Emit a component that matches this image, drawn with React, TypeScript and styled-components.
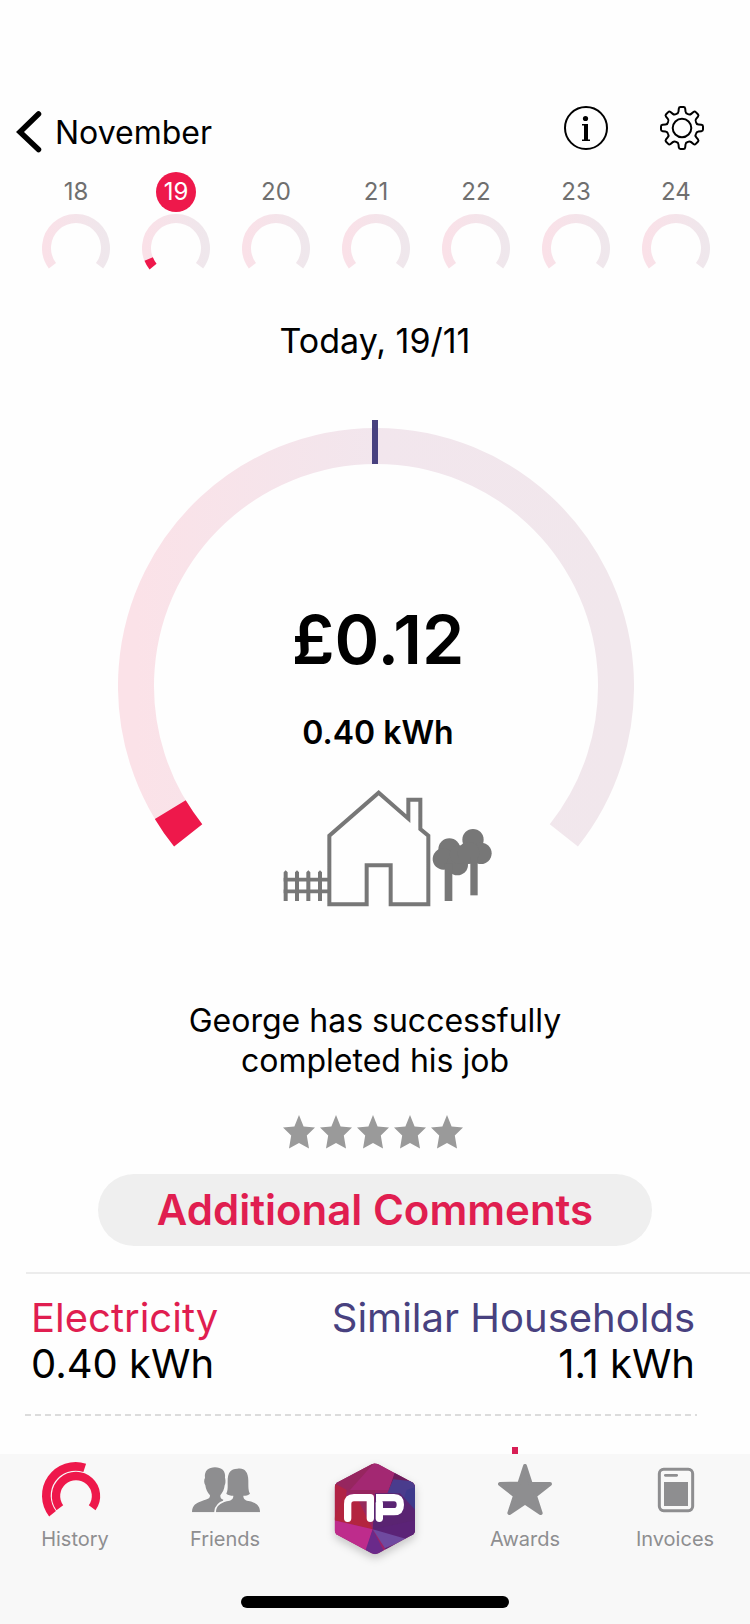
import React from "react";
import styled, { createGlobalStyle } from "styled-components";

const color = {
  accent: "#ee184b",
  accentDeep: "#e01e50",
  indigo: "#48417f",
  grey: "#8e8e90",
  dayGrey: "#6f6f6f",
  drawing: "#777777",
  star: "#9a9a9a",
  line: "#ececec",
  dash: "#dcdcdc",
  bar: "#f8f8f8",
};

const GlobalStyle = createGlobalStyle`
  *, *::before, *::after { box-sizing: border-box; }
  body {
    margin: 0;
    background: #fefefe;
    color: #000;
    font-family: Inter, "Liberation Sans", sans-serif;
  }
  h1, h2, p, dl, dt, dd { margin: 0; font-weight: 400; }
  button { border: 0; padding: 0; background: none; font: inherit; color: inherit; cursor: pointer; }
  a { color: inherit; text-decoration: none; }
  svg { display: block; }
`;

const Screen = styled.div`
  display: flex;
  flex-direction: column;
  min-height: 100vh;
  padding-top: 96px;
`;

const Header = styled.header`
  display: flex;
  align-items: center;
  justify-content: space-between;
  height: 64px;
  padding: 0 46px 0 16px;
`;

const BackLink = styled.a`
  display: flex;
  align-items: center;
  gap: 12px;
  padding-top: 10px;
  font-size: 32px;
  line-height: 40px;
`;

const HeaderActions = styled.div`
  display: flex;
  gap: 52px;
`;

const IconButton = styled.button`
  width: 44px;
  height: 44px;
`;

const Week = styled.nav`
  display: flex;
  margin-top: 12px;
  padding: 0 24px 0 26px;
`;

const Day = styled.button`
  display: flex;
  flex: 1;
  flex-direction: column;
  align-items: center;
  gap: 2px;
`;

const DayNumber = styled.span<{ $selected: boolean }>`
  width: 40px;
  height: 40px;
  border-radius: 50%;
  background: ${(p) => (p.$selected ? color.accent : "transparent")};
  color: ${(p) => (p.$selected ? "#fff" : color.dayGrey)};
  font-size: 24px;
  line-height: 40px;
  text-align: center;
`;

const DateTitle = styled.h1`
  margin-top: 51px;
  font-size: 34px;
  line-height: 40px;
  text-align: center;
`;

const Gauge = styled.section`
  display: grid;
  justify-items: center;
  margin-top: 59px;
  padding-left: 2px;

  & > * { grid-area: 1 / 1; }
`;

const Readout = styled.div`
  display: flex;
  flex-direction: column;
  align-items: center;
  padding: 179px 0 0 4px;
`;

const Cost = styled.p`
  font-size: 68px;
  font-weight: 600;
  line-height: 80px;
`;

const Energy = styled.p`
  margin: 34px 0 36px;
  font-size: 32px;
  font-weight: 600;
  line-height: 40px;
`;

const HouseDrawing = styled.svg`
  margin-left: 20px;
`;

const Message = styled.p`
  max-width: 400px;
  margin: 94px auto 0;
  font-size: 32px;
  line-height: 40px;
  text-align: center;
`;

const Rating = styled.div`
  display: flex;
  justify-content: center;
  gap: 5px;
  margin-top: 34px;
  padding-right: 4px;
`;

const CommentsButton = styled.button`
  width: calc(100% - 196px);
  height: 72px;
  margin: 25px auto 0;
  border-radius: 36px;
  background: #efefef;
  color: ${color.accentDeep};
  font-size: 42px;
  font-weight: 600;
  line-height: 72px;
`;

const Comparison = styled.dl`
  display: flex;
  justify-content: space-between;
  margin: 26px 0 0 26px;
  padding: 21px 55px 27px 5px;
  border-top: 2px solid ${color.line};
  font-size: 40px;
  line-height: 46px;
`;

const Figure = styled.div<{ $tint: string; $end?: boolean }>`
  text-align: ${(p) => (p.$end ? "right" : "left")};

  dt { color: ${(p) => p.$tint}; }
`;

const DashedRule = styled.hr`
  width: calc(100% - 78px);
  height: 2px;
  margin: 0 53px 0 25px;
  border: 0;
  background: repeating-linear-gradient(90deg, ${color.dash} 0 6px, transparent 6px 10px);
`;

const ChartPeek = styled.div`
  display: flex;
  flex: 1;
  align-items: flex-end;
  justify-content: flex-end;
  padding: 31px 232px 0 0;
`;

const ChartBar = styled.span`
  width: 6px;
  height: 7px;
  background: #d81e55;
`;

const Footer = styled.footer`
  display: flex;
  flex-direction: column;
  align-items: center;
  justify-content: space-between;
  height: 170px;
  padding: 6px 0 16px;
  background: ${color.bar};
`;

const Tabs = styled.nav`
  display: flex;
  width: 100%;
`;

const Tab = styled.a`
  display: flex;
  flex: 1;
  flex-direction: column;
  align-items: center;
  color: ${color.grey};
  font-size: 20px;
  line-height: 26px;
`;

const LogoIcon = styled.svg`
  filter: drop-shadow(0 4px 4px rgba(0, 0, 0, 0.2));
`;

const HomeIndicator = styled.div`
  width: 268px;
  height: 12px;
  border-radius: 6px;
  background: #000;
`;

/* Arc around (cx, cy); angles in degrees, clockwise from the top. */
function arc(cx: number, cy: number, r: number, from: number, to: number) {
  const point = (deg: number) => {
    const a = ((deg - 90) * Math.PI) / 180;
    return `${(cx + r * Math.cos(a)).toFixed(2)} ${(cy + r * Math.sin(a)).toFixed(2)}`;
  };
  return `M${point(from)}A${r} ${r} 0 ${to - from > 180 ? 1 : 0} 1 ${point(to)}`;
}

function gearPath() {
  const tooth: Array<[string, number[][]]> = [
    ["L", [[-5.8, -14]]],
    ["Q", [[-3.7, -14.4], [-3.5, -16.5]]],
    ["L", [[-3.2, -19.4]]],
    ["Q", [[-3, -21], [-1.5, -21]]],
    ["L", [[1.5, -21]]],
    ["Q", [[3, -21], [3.2, -19.4]]],
    ["L", [[3.5, -16.5]]],
    ["Q", [[3.7, -14.4], [5.8, -14]]],
  ];
  let d = "";
  for (let i = 0; i < 8; i++) {
    const a = (i * Math.PI) / 4;
    for (const [cmd, pts] of tooth) {
      d += (d === "" ? "M" : cmd) + pts
        .map(([x, y]) => `${(22 + x * Math.cos(a) - y * Math.sin(a)).toFixed(2)} ${(22 + x * Math.sin(a) + y * Math.cos(a)).toFixed(2)}`)
        .join(" ");
    }
  }
  return d + "Z";
}

const MiniRing = ({ day, used }: { day: number; used: boolean }) => (
  <svg width="68" height="56" viewBox="0 0 68 56" aria-hidden="true">
    <defs>
      <linearGradient id={`ring${day}`} x1="0" x2="1" y1="0" y2="0">
        <stop offset="0" stopColor="#fae1e8" />
        <stop offset="1" stopColor="#efe7ec" />
      </linearGradient>
    </defs>
    <path d={arc(34, 34, 29.5, -127, 127)} fill="none" stroke={`url(#ring${day})`} strokeWidth="9" />
    {used && <path d={arc(34, 34, 29.5, -129, -112)} fill="none" stroke={color.accent} strokeWidth="9" />}
  </svg>
);

const Dial = () => (
  <svg width="516" height="430" viewBox="0 0 516 430" aria-hidden="true">
    <defs>
      <linearGradient id="dial" x1="0" x2="1" y1="0" y2="0">
        <stop offset="0" stopColor="#fbe2e8" />
        <stop offset="0.5" stopColor="#f2e6ed" />
        <stop offset="1" stopColor="#f1e7ec" />
      </linearGradient>
    </defs>
    <path d={arc(258, 266, 240, -128.5, 128.5)} fill="none" stroke="url(#dial)" strokeWidth="36" />
    <path d={arc(258, 266, 240, -128.5, -121)} fill="none" stroke={color.accent} strokeWidth="36" />
    <rect x="254" y="0" width="6" height="44" fill={color.indigo} />
  </svg>
);

const House = () => (
  <HouseDrawing width="210" height="118" viewBox="70 596 630 354" aria-hidden="true">
    <path
      d="M209 942V736L357 607L446 685V628H482V716L506 736V942H393V825H321V942Z"
      fill="none"
      stroke={color.drawing}
      strokeWidth="12"
    />
    <path d="M72 868H205M72 903H205" stroke={color.drawing} strokeWidth="11" />
    <path
      d="M72 932V846L78 840L84 846V932ZM106 932V846L112 840L118 846V932ZM140 932V846L146 840L152 846V932ZM175 932V846L181 840L187 846V932Z"
      fill={color.drawing}
    />
    <g fill={color.drawing}>
      <circle cx="569" cy="777" r="33" />
      <circle cx="551" cy="806" r="32" />
      <circle cx="593" cy="823" r="32" />
      <circle cx="598" cy="793" r="28" />
      <rect x="555" y="820" width="23" height="112" />
      <circle cx="640" cy="748" r="32" />
      <circle cx="664" cy="789" r="32" />
      <circle cx="627" cy="788" r="33" />
      <rect x="632" y="800" width="22" height="115" />
    </g>
  </HouseDrawing>
);

const HistoryIcon = () => (
  <svg width="80" height="66" viewBox="105 60 240 198" fill="none" stroke={color.accent} aria-hidden="true">
    <path d={arc(227, 167, 88, -128, 18)} strokeWidth="26" />
    <path d={arc(228, 168, 60, -126, 126)} strokeWidth="25" />
  </svg>
);

const FriendsIcon = () => (
  <svg width="80" height="66" viewBox="555 60 240 198" fill={color.grey} aria-hidden="true">
    <path d="M576 217C576 195 590 188 606 183C622 178 630 177 630 166C622 158 617 146 616 136C611 128 612 118 615 114C612 92 626 82 645 82C664 82 678 92 675 114C677 118 678 130 674 136C673 148 668 158 661 166C661 172 662 177 670 179L660 217Z" />
    <path
      d="M648 217C648 198 660 190 680 184C694 181 700 178 700 167C692 167 684 165 679 161C684 152 683 140 683 124C683 98 692 86 712 86C730 82 745 92 745 122C745 142 745 152 750 161C745 166 737 167 730 167C730 178 736 181 750 184C770 190 780 198 780 217Z"
      stroke={color.bar}
      strokeWidth="11"
      paintOrder="stroke"
    />
    <rect x="560" y="217" width="230" height="8" fill={color.bar} />
  </svg>
);

const AwardsIcon = () => (
  <svg width="80" height="66" viewBox="105 60 240 198" aria-hidden="true">
    <path
      d="M225 78L242 131L300 132L255 167L272 219L225 188L178 219L195 167L150 132L208 131Z"
      fill={color.grey}
      stroke={color.grey}
      strokeWidth="12"
      strokeLinejoin="round"
    />
  </svg>
);

const InvoicesIcon = () => (
  <svg width="80" height="66" viewBox="555 60 240 198" aria-hidden="true">
    <rect x="628" y="88" width="100" height="124" rx="13" fill="none" stroke={color.grey} strokeWidth="9" />
    <path d="M646 106H680" stroke={color.grey} strokeWidth="8" strokeLinecap="round" />
    <rect x="642" y="126" width="72" height="72" fill={color.grey} />
  </svg>
);

const BrandIcon = () => (
  <LogoIcon width="96" height="96" viewBox="81 60 288 288" aria-hidden="true">
    <defs>
      <clipPath id="hexagon">
        <path d="M215 73Q225 68 235 73L336 127Q345 132 345 143V269Q345 280 336 285L235 340Q225 345 215 340L113 285Q104 280 104 269V143Q104 132 113 127Z" />
      </clipPath>
    </defs>
    <g clipPath="url(#hexagon)">
      <rect x="100" y="66" width="250" height="280" fill="#9b2468" />
      <path d="M100 130L150 160L225 165V66H100Z" fill="#96265f" />
      <path d="M225 66L285 100L265 150L150 150Z" fill="#a32872" />
      <path d="M100 128L140 150L132 245L100 240Z" fill="#b12345" />
      <path d="M130 170L170 170L218 268L100 240Z" fill="#b3253f" />
      <path d="M170 170H225V268Z" fill="#962b5b" />
      <path d="M285 95L350 130V160L280 120L265 155Z" fill="#6b1d5c" />
      <path d="M280 118L350 125V215L300 165L262 160Z" fill="#4a3c8d" />
      <path d="M320 150L350 140V280L300 210Z" fill="#3e3a8c" />
      <path d="M225 160H300L350 215V290L218 268Z" fill="#5a2472" />
      <path d="M100 240L218 268L195 345L100 290Z" fill="#be2c8c" />
      <path d="M218 268L260 350H190Z" fill="#6a2a8a" />
      <path d="M218 268L255 325L322 298L300 275Z" fill="#6f4aa0" />
      <path d="M322 298L255 325L262 345L350 290Z" fill="#59267a" />
      <path d="M218 268L350 240V290L322 298Z" fill="#5b2377" />
    </g>
    <g fill="none" stroke="#fff" strokeWidth="22" strokeLinejoin="round">
      <path d="M143 235V192Q143 173 162 173H211V235" strokeLinecap="round" />
      <path d="M238 235V190" strokeLinecap="round" />
      <path d="M228 173H282Q301 173 301 194Q301 215 282 215H238" />
    </g>
  </LogoIcon>
);

const days = [18, 19, 20, 21, 22, 23, 24];
const selectedDay = 19;

export default function App() {
  return (
    <>
      <GlobalStyle />
      <Screen>
        <Header>
          <BackLink href="#november">
            <svg width="27" height="44" viewBox="0 0 27 44" fill="none" aria-hidden="true">
              <path d="M22.500 3L4 21L22.500 38.500" stroke="#000" strokeWidth="5.500" strokeLinecap="round" strokeLinejoin="miter" />
            </svg>
            November
          </BackLink>
          <HeaderActions>
            <IconButton type="button" aria-label="Information">
              <svg width="44" height="44" viewBox="0 0 44 44" fill="none" aria-hidden="true">
                <circle cx="22" cy="22" r="21" stroke="#000" strokeWidth="2" />
                <circle cx="21.500" cy="12.500" r="2.600" fill="#000" />
                <path d="M18 18H24V33.500H26V35H18V33.500H20V19.500H18Z" fill="#000" />
              </svg>
            </IconButton>
            <IconButton type="button" aria-label="Settings">
              <svg width="44" height="44" viewBox="0 0 44 44" fill="none" stroke="#000" strokeWidth="2" aria-hidden="true">
                <path d={gearPath()} strokeLinejoin="round" />
                <circle cx="22" cy="22" r="9.300" />
              </svg>
            </IconButton>
          </HeaderActions>
        </Header>

        <Week aria-label="Days">
          {days.map((day) => (
            <Day key={day} type="button" aria-pressed={day === selectedDay}>
              <DayNumber $selected={day === selectedDay}>{day}</DayNumber>
              <MiniRing day={day} used={day === selectedDay} />
            </Day>
          ))}
        </Week>

        <DateTitle>Today, 19/11</DateTitle>

        <Gauge>
          <Dial />
          <Readout>
            <Cost>£0.12</Cost>
            <Energy>0.40 kWh</Energy>
            <House />
          </Readout>
        </Gauge>

        <Message>George has successfully completed his job</Message>

        <Rating role="group" aria-label="Rating">
          {[1, 2, 3, 4, 5].map((n) => (
            <button key={n} type="button" aria-label={`${n} of 5 stars`}>
              <svg width="32" height="34" viewBox="0 0 32 34" aria-hidden="true">
                <path d="M16 0L20.600 11.500L32 12.500L23.800 20.500L26 33.500L16 28L6 33.500L8.200 20.500L0 12.500L11.400 11.500Z" fill={color.star} />
              </svg>
            </button>
          ))}
        </Rating>

        <CommentsButton type="button">Additional Comments</CommentsButton>

        <Comparison>
          <Figure $tint={color.accentDeep}>
            <dt>Electricity</dt>
            <dd>0.40 kWh</dd>
          </Figure>
          <Figure $tint={color.indigo} $end>
            <dt>Similar Households</dt>
            <dd>1.1 kWh</dd>
          </Figure>
        </Comparison>
        <DashedRule />
        <ChartPeek>
          <ChartBar />
        </ChartPeek>

        <Footer>
          <Tabs aria-label="Main">
            <Tab href="#history"><HistoryIcon />History</Tab>
            <Tab href="#friends"><FriendsIcon />Friends</Tab>
            <Tab href="#home" aria-label="Home"><BrandIcon /></Tab>
            <Tab href="#awards"><AwardsIcon />Awards</Tab>
            <Tab href="#invoices"><InvoicesIcon />Invoices</Tab>
          </Tabs>
          <HomeIndicator />
        </Footer>
      </Screen>
    </>
  );
}
